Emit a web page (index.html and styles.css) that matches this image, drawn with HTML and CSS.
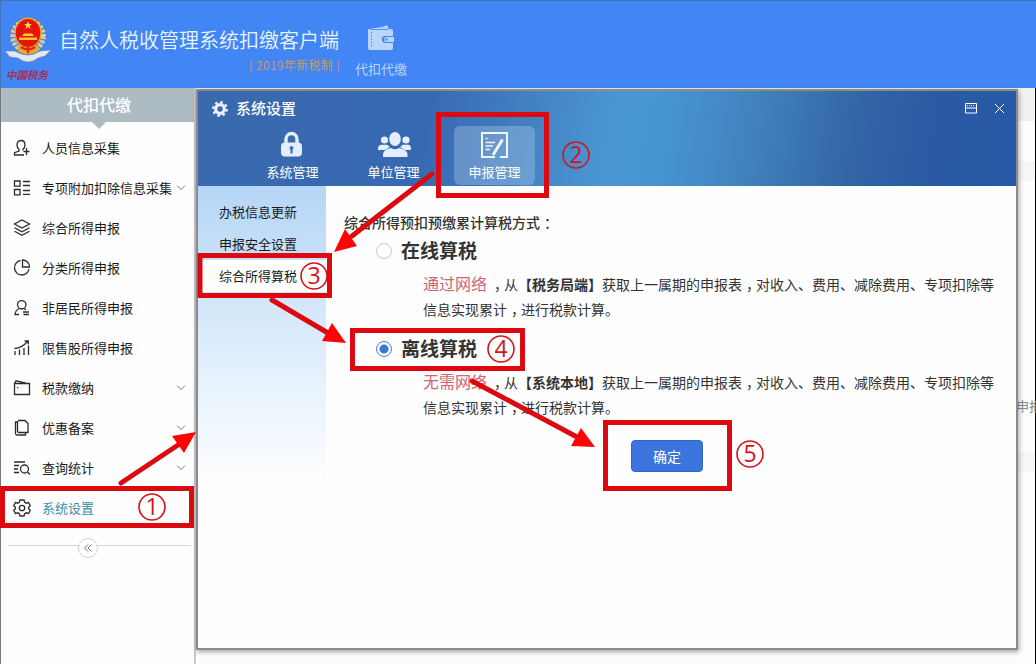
FILE: index.html
```html
<!DOCTYPE html>
<html lang="zh-CN">
<head>
  <meta charset="UTF-8" />
  <title>自然人税收管理系统扣缴客户端</title>
  <link rel="stylesheet" href="styles.css">
</head>
<body>

  <header class="top-bar">
    <div class="logo">
      <svg width="48" height="49" viewBox="0 0 48 49">
        <circle cx="24" cy="20" r="15.5" fill="none" stroke="#d5cda8" stroke-width="5" stroke-dasharray="3 1.3"/>
        <circle cx="24" cy="20" r="18" fill="none" stroke="#68746f" stroke-width="1" stroke-dasharray="2 2"/>
        <path d="M1 35 L11 35 Q24 43 36 35 L47 34 L41 40 L34 42 Q24 50 14 42 L6 41 Z" fill="#e5e9ed" stroke="#6f85a5" stroke-width=".7"/>
        <path d="M13 30 H35 L33 36 Q24 40 15 36 Z" fill="#e4ad28"/>
        <ellipse cx="24" cy="17" rx="13.5" ry="15.5" fill="#f4ab22"/>
        <ellipse cx="24" cy="17" rx="12.3" ry="14" fill="#e6150c"/>
        <path d="M24 5 L25 8 H28 L25.600 9.800 L26.500 13 L24 11 L21.500 13 L22.400 9.800 L20 8 H23 Z" fill="#ffe04a"/>
        <path d="M18 20 H30 L28 17.500 H20 Z M15 24 H33 V21.500 H15 Z" fill="#f8c62f"/>
        <path d="M17 31 Q24 36 31 31 M24 29 V37" stroke="#df2413" stroke-width="2.5" fill="none"/>
      </svg>
      <div class="logo-text">中国税务</div>
    </div>
    <div class="app-name">
      <h1>自然人税收管理系统扣缴客户端</h1>
      <span>[ 2019年新税制 ]</span>
    </div>
    <div class="top-tab">
      <svg width="28" height="28" viewBox="0 0 28 28">
        <path d="M1 4 L14 2 L19 0 L21 4 Z" fill="#b5d3ff"/>
        <path d="M2 4 H23 Q25 4 25 6 V11 H17 Q14 11 14 14 Q14 18 17 18 H25 V23 Q25 25 23 25 H2 Q0 25 0 23 V4 Z" fill="#b9d6ff"/>
        <path d="M18 12 H26 V17 H18 Q16 17 16 14.5 Q16 12 18 12 Z" fill="#b9d6ff"/>
        <circle cx="18.5" cy="14.5" r="1.2" fill="#4285ee"/>
        <path d="M3.5 7 V23" stroke="#4285ee" stroke-dasharray="1.5 1.8"/>
        <path d="M2 4.5 H21" stroke="#4285ee" stroke-width=".8"/>
      </svg>
      <span>代扣代缴</span>
    </div>
  </header>

  <div class="main">
    <aside class="sidebar">
      <div class="side-title">代扣代缴</div>
      <ul class="menu">
        <li>
          <svg class="icon" viewBox="0 0 18 18"><path d="M8 1.5 C5 1.5 4 3.5 4 6 C4 8 5 9.5 6 10.3 V12 L1.5 13.7 V16 H11 M8 1.5 C11 1.5 12 3.5 12 6 C12 8 11 9.5 10 10.3 V11.5 M13.5 9 V16 M10.5 12.5 H16.5"/></svg>
          <span>人员信息采集</span>
        </li>
        <li>
          <svg class="icon" viewBox="0 0 18 18"><path d="M1.5 2 H7 V7.2 H1.5 Z M1.5 10.5 H7 V15.8 H1.5 Z M10 2.5 H17 M10 6.5 H17 M10 11.5 H17 M10 15.3 H17"/></svg>
          <span>专项附加扣除信息采集</span>
          <svg class="chevron" viewBox="0 0 10 6"><path d="M1 .7 L5 4.7 L9 .7"/></svg>
        </li>
        <li>
          <svg class="icon" viewBox="0 0 18 18"><path d="M9 1 L16.5 5 L9 9 L1.5 5 Z M1.5 8.7 L9 12.7 L16.5 8.7 M1.5 12.2 L9 16.2 L16.5 12.2"/></svg>
          <span>综合所得申报</span>
        </li>
        <li>
          <svg class="icon" viewBox="0 0 18 18"><path d="M7.5 1.5 A7.3 7.3 0 1 0 16 10 M9.5 1 V8 H16.5 A7 7 0 0 0 9.5 1 Z"/></svg>
          <span>分类所得申报</span>
        </li>
        <li>
          <svg class="icon" viewBox="0 0 18 18"><circle cx="8.7" cy="5.8" r="4.2"/><path d="M6.5 9.5 C3.5 10.5 2.3 12.5 2 15.5 H6 M11 9.5 L13 11 M10 13 H16 M10.5 15.500 H16"/></svg>
          <span>非居民所得申报</span>
        </li>
        <li>
          <svg class="icon" viewBox="0 0 18 18"><path d="M2 16 V12 M6.5 16 V10.5 M11 16 V9 M15.5 16 V6.5 M1.5 9.5 Q9 9 15 2 M11.5 2 H15.3 V5.5"/></svg>
          <span>限售股所得申报</span>
        </li>
        <li>
          <svg class="icon" viewBox="0 0 18 18"><path d="M1.5 4.5 H16.5 V15.5 H1.5 Z M1.5 4.5 L3 1.8 L14 4.3 M4 8.7 H5.3"/></svg>
          <span>税款缴纳</span>
          <svg class="chevron" viewBox="0 0 10 6"><path d="M1 .7 L5 4.7 L9 .7"/></svg>
        </li>
        <li>
          <svg class="icon" viewBox="0 0 18 18"><path d="M5 1.5 H12 L15 4.5 V13.5 H6 Q4.5 13.5 4.5 12 V2 M4.5 3 H2.5 V14.5 Q2.5 16 4 16 H12.5 V13.5"/></svg>
          <span>优惠备案</span>
          <svg class="chevron" viewBox="0 0 10 6"><path d="M1 .7 L5 4.7 L9 .7"/></svg>
        </li>
        <li>
          <svg class="icon" viewBox="0 0 18 18"><path d="M1 3 H12 M1 6.5 H6 M1 10 H5 M1 13.5 H6 M14.5 13 L17 15.5"/><circle cx="11.5" cy="10" r="4"/></svg>
          <span>查询统计</span>
          <svg class="chevron" viewBox="0 0 10 6"><path d="M1 .7 L5 4.7 L9 .7"/></svg>
        </li>
        <li class="active">
          <svg class="icon" viewBox="0 0 18 18"><path d="M7 1 H11 L11.7 3.3 L13.2 4.2 L15.6 3.6 L17.3 6.8 L15.6 8.4 V9.6 L17.3 11.2 L15.6 14.4 L13.2 13.8 L11.7 14.7 L11 17 H7 L6.3 14.7 L4.8 13.8 L2.4 14.4 L.7 11.2 L2.4 9.6 V8.4 L.7 6.8 L2.4 3.6 L4.8 4.2 L6.3 3.3 Z"/><circle cx="9" cy="9" r="2.7"/></svg>
          <span>系统设置</span>
        </li>
      </ul>
      <div class="collapse">
        <div class="collapse-btn">
          <svg width="10" height="10" viewBox="0 0 10 10"><path d="M5 1.500 L1.500 5 L5 8.500 M8.500 1.500 L5 5 L8.500 8.500" fill="none" stroke="#777"/></svg>
        </div>
      </div>
    </aside>
    <section class="page">
      <div class="page-head"></div>
      <div class="page-row"></div>
      <div class="page-text">申报</div>
      <div class="page-row"></div>
    </section>
  </div>

  <div class="dialog">
    <div class="dialog-head">
      <div class="dialog-title">
        <svg width="16" height="16" viewBox="0 0 16 16"><circle cx="8" cy="8" r="4.3" fill="none" stroke="#e8f2ff" stroke-width="3.2"/><circle cx="8" cy="8" r="6.7" fill="none" stroke="#e8f2ff" stroke-width="2.4" stroke-dasharray="2.63 2.63"/></svg>
        <span>系统设置</span>
        <div class="window-btns">
          <svg width="12" height="11" viewBox="0 0 12 11"><path d="M.5 .5 H11.5 V10 H.5 Z M1 5 H11" fill="none" stroke="#fff"/><path d="M2 2.7 H10" stroke="#fff" stroke-dasharray="1 1"/></svg>
          <svg width="11" height="11" viewBox="0 0 11 11"><path d="M1 1 L10 10 M10 1 L1 10" stroke="#fff"/></svg>
        </div>
      </div>
      <div class="tabs">
        <div class="tab">
          <svg width="34" height="28" viewBox="0 0 34 28"><path d="M10 12 V8 A5.500 5.500 0 0 1 21 8 V12" fill="none" stroke="#e3efff" stroke-width="3.4"/><rect x="5" y="11.5" width="21" height="14" rx="4" fill="#e3efff"/><path d="M15.500 15 a2 2 0 0 1 1 3.7 V22.500 H14.500 V18.700 A2 2 0 0 1 15.500 15" fill="#3a6cb0"/></svg>
          <span>系统管理</span>
        </div>
        <div class="tab">
          <svg width="34" height="28" viewBox="0 0 34 28"><g fill="#e3efff"><circle cx="7.5" cy="9" r="3.6"/><circle cx="29" cy="9" r="3.6"/><path d="M1 19 V17.5 Q1 14 5 13.7 H10 L13 16 L8 19 Z M34 19 V17.5 Q34 14 31 13.7 H26 L23 16 L28 19 Z"/><ellipse cx="18" cy="8" rx="5.8" ry="7"/><path d="M6 26 V23 Q6.500 18.500 14 17 Q18 19.500 22 17 Q30 18.500 30.500 23 V26 Z"/></g></svg>
          <span>单位管理</span>
        </div>
        <div class="tab selected">
          <svg width="34" height="28" viewBox="0 0 34 28"><path d="M17 26 H4 V2 H29 V26 H22" fill="none" stroke="#eef5ff" stroke-width="2"/><path d="M7.500 7.500 H9.500 M7.500 11.500 H17 M7.500 15 H15 M7.500 18.500 H12" stroke="#eef5ff" stroke-width="1.500"/><path d="M15 24 L24.500 8.500" stroke="#eef5ff" stroke-width="3"/></svg>
          <span>申报管理</span>
        </div>
      </div>
    </div>
    <div class="dialog-body">
      <div class="sub-menu">
        <div>办税信息更新</div>
        <div>申报安全设置</div>
        <div class="current">综合所得算税</div>
      </div>
      <div class="content">
        <div class="question">综合所得预扣预缴累计算税方式<span class="mark">：</span></div>
        <div class="option">
          <div class="option-name"><i class="radio"></i><span>在线算税</span></div>
          <p><em>通过网络</em><span class="mark">，</span>从<b>【税务局端】</b>获取上一属期的申报表<span class="mark">，</span>对收入、费用、减除费用、专项扣除等<br>信息实现累计<span class="mark">，</span>进行税款计算。</p>
        </div>
        <div class="option">
          <div class="option-name"><i class="radio checked"></i><span>离线算税</span></div>
          <p><em>无需网络</em><span class="mark">，</span>从<b>【系统本地】</b>获取上一属期的申报表<span class="mark">，</span>对收入、费用、减除费用、专项扣除等<br>信息实现累计<span class="mark">，</span>进行税款计算。</p>
        </div>
        <button class="ok-btn">确定</button>
      </div>
    </div>
  </div>

  <!-- step markers over the window -->
  <svg class="steps" width="1036" height="664" viewBox="0 0 1036 664">
    <g class="boxes">
      <rect x="2.500" y="488.500" width="189" height="37"/>
      <rect x="438.500" y="114.500" width="108" height="81"/>
      <rect x="200" y="255.500" width="129.500" height="40"/>
      <rect x="352.500" y="330.500" width="170" height="38"/>
      <rect x="605.500" y="422.500" width="124" height="66"/>
    </g>
    <g class="lines">
      <path d="M121 483 L178 445"/>
      <path d="M432 174 L352 236"/>
      <path d="M272 300 L328 333"/>
      <path d="M472 381 L577 437"/>
    </g>
    <g class="heads">
      <path d="M196 432 L172 436 L184 453 Z"/>
      <path d="M334 252 L345 229 L357 246 Z"/>
      <path d="M346 343 L332 323 L322 341 Z"/>
      <path d="M595 447 L581 428 L571 446 Z"/>
    </g>
    <g class="rings">
      <circle cx="152" cy="507" r="13"/>
      <circle cx="576" cy="155" r="13"/>
      <circle cx="314" cy="276" r="13"/>
      <circle cx="501" cy="349" r="13"/>
      <circle cx="750" cy="454" r="13"/>
    </g>
    <g class="numbers">
      <text x="152" y="515">1</text>
      <text x="576" y="163">2</text>
      <text x="314" y="284">3</text>
      <text x="501" y="357">4</text>
      <text x="750" y="462">5</text>
    </g>
  </svg>

</body>
</html>
```

FILE: styles.css
```css
* {
  box-sizing: border-box;
}

body {
  margin: 0;
  width: 1036px;
  height: 664px;
  overflow: hidden;
  position: relative;
  font-family: "Noto Sans CJK SC", sans-serif;
  font-size: 13px;
  color: #222;
  background: #fdfdfd;
}

svg {
  display: block;
  flex: none;
}

/* top bar */
.top-bar {
  height: 88px;
  display: flex;
  background: #4285f4;
  border-top: 1px solid #3f75b8;
  border-left: 1px solid #3f75b8;
}

.logo {
  width: 58px;
  padding: 15px 0 0 3px;
}

.logo-text {
  width: 46px;
  margin-top: 1px;
  font: italic bold 10.5px/17px "Noto Sans CJK SC", sans-serif;
  color: #a93058;
  text-align: center;
}

.app-name {
  width: 281px;
  display: flex;
  flex-direction: column;
}

.app-name h1 {
  margin: 24px 0 0;
  font-size: 20px;
  font-weight: 350;
  line-height: 30px;
  color: #e9f6ff;
}

.app-name span {
  align-self: flex-end;
  margin-top: 0;
  font-size: 12px;
  letter-spacing: .25px;
  line-height: 20px;
  color: #c69a62;
}

.top-tab {
  margin-left: 15px;
  padding-top: 24px;
  line-height: 20px;
  color: #b9d6ff;
}

.top-tab svg {
  margin: 0 0 6px 13px;
}

/* left menu */
.main {
  display: flex;
  height: 576px;
}

.sidebar {
  width: 196px;
  border-left: 1px solid #777;
  border-right: 2px solid #c9c9c9;
  background: #fefefe;
}

.side-title {
  height: 34px;
  line-height: 33px;
  font-size: 16px;
  font-weight: 500;
  text-align: center;
  color: #fff;
  background: #adbbc3;
  padding-left: 3px;
}

.side-title::after {
  content: '';
  display: block;
  width: 0;
  margin: 1px auto 0;
  border: 7px solid transparent;
  border-top-color: #adbbc3;
  border-bottom: none;
}

.menu {
  list-style: none;
  margin: 0;
  padding: 6px 0 0;
}

.menu li {
  height: 40px;
  display: flex;
  align-items: center;
  padding: 0 8px 0 12px;
  color: #1a1a1a;
}

.menu li.active {
  color: #3c8fa8;
}

.icon {
  width: 18px;
  height: 18px;
  margin-right: 11px;
  fill: none;
  stroke: #2b2b33;
  stroke-width: 1.3;
}

.menu span {
  line-height: 18px;
  padding-bottom: 1px;
}

.chevron {
  width: 10px;
  height: 6px;
  margin-left: auto;
  fill: none;
  stroke: #777;
}

.collapse {
  margin: 17px 3px 0 7px;
  border-top: 1px solid #d8d5da;
}

.collapse-btn {
  width: 20px;
  height: 20px;
  margin: -8px 0 0 70px;
  border: 1px solid #d8ccd8;
  border-radius: 50%;
  background: #fff;
  display: flex;
  align-items: center;
  justify-content: center;
}

/* page behind the dialog */
.page {
  flex: 1;
  border-right: 1px solid #000;
  text-align: right;
}

.page-head {
  height: 33px;
  background: #f0f0f0;
  margin-bottom: 40px;
}

.page-row {
  height: 20px;
  background: #f5f6f8;
}

.page-text {
  margin: 215px -7px 36px 0;
  line-height: 20px;
  color: #888;
}

/* dialog window */
.dialog {
  position: absolute;
  left: 196px;
  top: 89px;
  width: 822px;
  height: 561px;
  border: 2px solid #8b8b8b;
  background: #fefefe;
  box-shadow: 1px 2px 5px rgba(0, 0, 0, .35);
}

.dialog-head {
  height: 95px;
  color: #fff;
  background: linear-gradient(100deg, #3a69ae 0%, #3769b2 28%, #4281c2 40%, #4a96d2 50%, #4796d2 56%, #4080bc 68%, #3264a6 80%, #2b5ba2 88%, #2758a8 100%);
}

.dialog-title {
  height: 35px;
  display: flex;
  align-items: center;
  padding: 0 11px 0 14px;
  font-size: 15px;
  font-weight: 500;
}

.dialog-title span {
  margin-left: 8px;
  padding-bottom: 3px;
}

.window-btns {
  margin-left: auto;
  display: flex;
  align-items: center;
  gap: 17px;
}

.tabs {
  display: flex;
  gap: 20px;
  padding-left: 54px;
}

.tab {
  width: 81px;
  height: 59px;
  padding-top: 5px;
  display: flex;
  flex-direction: column;
  align-items: center;
  line-height: 25px;
  border-radius: 6px;
}

.tab.selected {
  background: rgba(255, 255, 255, .22);
}

.dialog-body {
  display: flex;
}

.sub-menu {
  width: 128px;
  height: 300px;
  padding-top: 10px;
  line-height: 32px;
  color: #1a1a1a;
  background: linear-gradient(#b5d6f6, #cce3f9 30%, #e6f2fd 65%, #fefefe);
}

.sub-menu div {
  padding-left: 21px;
}

.sub-menu .current {
  background: #fefefe;
}

.content {
  flex: 1;
  padding: 25px 0 0 18px;
  font-size: 14px;
  color: #333;
}

.question {
  font-weight: 500;
  line-height: 22px;
}

/* half-width punctuation, centred in a full-width cell */
.mark {
  font-feature-settings: "halt";
  padding: 0 3px 0 4px;
}

.option {
  height: 98px;
  padding-left: 32px;
}

.option-name {
  height: 35px;
  display: flex;
  align-items: center;
  font-size: 19px;
  font-weight: bold;
}

.option-name span {
  padding-bottom: 3px;
}

.radio {
  width: 16px;
  height: 16px;
  margin-right: 9px;
  border: 1px solid #c8c8c8;
  border-radius: 50%;
}

.radio.checked {
  border-color: #4a80d4;
  background: radial-gradient(#3f78d4 4px, #fff 5px);
}

.option p {
  margin: 3px 0 0 47px;
  line-height: 25px;
  white-space: nowrap;
}

.option em {
  font-style: normal;
  font-size: 16px;
  color: #cf6472;
  margin-right: 3px;
}

.ok-btn {
  display: block;
  width: 72px;
  height: 32px;
  margin: 11px 0 0 287px;
  padding: 0;
  border: 1px solid #3266c4;
  border-radius: 4px;
  background: #3b74dc;
  color: #fff;
  font: 14px "Noto Sans CJK SC", sans-serif;
}

/* step markers */
.steps {
  position: absolute;
  left: 0;
  top: 0;
}

.boxes {
  fill: none;
  stroke: #dc0a10;
  stroke-width: 5;
}

.lines {
  stroke: #dc0a10;
  stroke-width: 5;
  stroke-linecap: round;
}

.heads {
  fill: #fc0404;
}

.rings {
  fill: none;
  stroke: #d3141c;
  stroke-width: 1.6;
}

.numbers {
  fill: #d3141c;
  font-family: "Open Sans", sans-serif;
  font-size: 23px;
  text-anchor: middle;
}
```
